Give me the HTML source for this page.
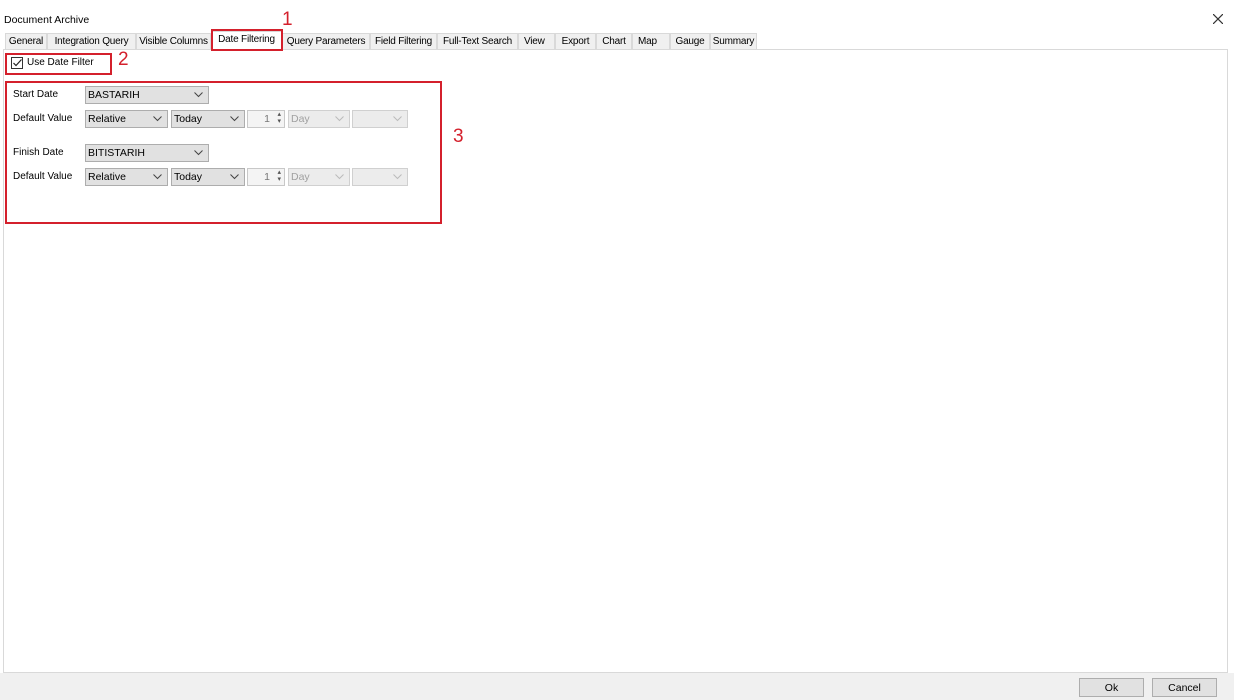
<!DOCTYPE html><html><head><style>
body{margin:0;width:1234px;height:700px;background:#fff;font-family:"Liberation Sans",sans-serif;font-size:11px;color:#000;position:relative;overflow:hidden}
.a{position:absolute;white-space:nowrap}
.tab{position:absolute;top:33px;height:16px;background:#f0f0f0;border:1px solid #d9d9d9;border-bottom:none;box-sizing:border-box;padding-top:2px;text-align:center;font-size:10px;white-space:nowrap;overflow:hidden;letter-spacing:-0.2px}
.red{position:absolute;border:2px solid #d4202c;box-sizing:border-box}
.num{position:absolute;color:#d4202c;font-size:19px}
.cb{position:absolute;height:18px;background:#e1e1e1;border:1px solid #adadad;box-sizing:border-box;padding:2px 0 0 2px;font-size:10.5px;white-space:nowrap}
.cb.d{background:#ececec;border-color:#d0d0d0;color:#a0a0a0}
.cb svg{position:absolute;right:5px;top:5px}
.btn{position:absolute;top:678px;height:19px;background:#e1e1e1;border:1px solid #adadad;box-sizing:border-box;text-align:center;padding-top:3px;font-size:10.5px}
.l{position:absolute;left:13px;font-size:10px;white-space:nowrap}
</style></head><body>
<div class="a" style="left:4px;top:14px;font-size:10.5px">Document Archive</div>
<svg class="a" style="left:1213px;top:14px" width="10" height="10"><path d="M0 0L10 10M10 0L0 10" stroke="#333" stroke-width="1.2"/></svg>
<div class="a" style="left:3px;top:49px;width:1225px;height:624px;border:1px solid #d9d9d9;box-sizing:border-box"></div>
<div class="a" style="left:0;top:673px;width:1234px;height:27px;background:#f0f0f0"></div>
<div class="tab" style="left:5px;width:42px">General</div>
<div class="tab" style="left:47px;width:89px">Integration Query</div>
<div class="tab" style="left:136px;width:75px">Visible Columns</div>
<div class="tab" style="left:211px;width:71px;top:31px;height:19px;background:#fff">Date Filtering</div>
<div class="tab" style="left:282px;width:88px">Query Parameters</div>
<div class="tab" style="left:370px;width:67px">Field Filtering</div>
<div class="tab" style="left:437px;width:81px">Full-Text Search</div>
<div class="tab" style="left:518px;width:37px;text-align:left;padding-left:5px">View</div>
<div class="tab" style="left:555px;width:41px">Export</div>
<div class="tab" style="left:596px;width:36px">Chart</div>
<div class="tab" style="left:632px;width:38px;text-align:left;padding-left:5px">Map</div>
<div class="tab" style="left:670px;width:40px">Gauge</div>
<div class="tab" style="left:710px;width:47px">Summary</div>
<div class="red" style="left:211px;top:29px;width:72px;height:22px"></div>
<div class="num" style="left:282px;top:9px">1</div>
<div class="red" style="left:5px;top:53px;width:107px;height:22px"></div>
<div class="num" style="left:118px;top:49px">2</div>
<div class="a" style="left:11px;top:57px;width:12px;height:12px;border:1px solid #333;box-sizing:border-box"></div>
<svg class="a" style="left:13px;top:59px" width="9" height="8"><path d="M0.5 4L3 6.5L8.5 0.5" stroke="#222" fill="none" stroke-width="1.2"/></svg>
<div class="a" style="left:27px;top:57px;font-size:10px">Use Date Filter</div>
<div class="red" style="left:5px;top:81px;width:437px;height:143px"></div>
<div class="num" style="left:453px;top:126px">3</div>
<div class="l" style="top:89px">Start Date</div>
<div class="l" style="top:113px">Default Value</div>
<div class="l" style="top:147px">Finish Date</div>
<div class="l" style="top:171px">Default Value</div>
<div class="cb" style="left:85px;top:86px;width:124px">BASTARIH<svg width="9" height="6"><path d="M0.5 0.5L4.5 4.5L8.5 0.5" stroke="#444" fill="none"/></svg></div>
<div class="cb" style="left:85px;top:144px;width:124px">BITISTARIH<svg width="9" height="6"><path d="M0.5 0.5L4.5 4.5L8.5 0.5" stroke="#444" fill="none"/></svg></div>
<div class="cb" style="left:85px;top:110px;width:83px">Relative<svg width="9" height="6"><path d="M0.5 0.5L4.5 4.5L8.5 0.5" stroke="#444" fill="none"/></svg></div>
<div class="cb" style="left:171px;top:110px;width:74px">Today<svg width="9" height="6"><path d="M0.5 0.5L4.5 4.5L8.5 0.5" stroke="#444" fill="none"/></svg></div>
<div class="cb" style="left:247px;top:110px;width:38px;background:#f4f4f4;border-color:#c8c8c8;color:#777;text-align:right;padding-right:14px">1<span style="position:absolute;right:3px;top:0;font-size:7px;line-height:7px;color:#555">▴<br>▾</span></div>
<div class="cb d" style="left:288px;top:110px;width:62px">Day<svg width="9" height="6"><path d="M0.5 0.5L4.5 4.5L8.5 0.5" stroke="#bbb" fill="none"/></svg></div>
<div class="cb d" style="left:352px;top:110px;width:56px"><svg width="9" height="6"><path d="M0.5 0.5L4.5 4.5L8.5 0.5" stroke="#bbb" fill="none"/></svg></div>
<div class="cb" style="left:85px;top:168px;width:83px">Relative<svg width="9" height="6"><path d="M0.5 0.5L4.5 4.5L8.5 0.5" stroke="#444" fill="none"/></svg></div>
<div class="cb" style="left:171px;top:168px;width:74px">Today<svg width="9" height="6"><path d="M0.5 0.5L4.5 4.5L8.5 0.5" stroke="#444" fill="none"/></svg></div>
<div class="cb" style="left:247px;top:168px;width:38px;background:#f4f4f4;border-color:#c8c8c8;color:#777;text-align:right;padding-right:14px">1<span style="position:absolute;right:3px;top:0;font-size:7px;line-height:7px;color:#555">▴<br>▾</span></div>
<div class="cb d" style="left:288px;top:168px;width:62px">Day<svg width="9" height="6"><path d="M0.5 0.5L4.5 4.5L8.5 0.5" stroke="#bbb" fill="none"/></svg></div>
<div class="cb d" style="left:352px;top:168px;width:56px"><svg width="9" height="6"><path d="M0.5 0.5L4.5 4.5L8.5 0.5" stroke="#bbb" fill="none"/></svg></div>
<div class="btn" style="left:1079px;width:65px">Ok</div>
<div class="btn" style="left:1152px;width:65px">Cancel</div>
</body></html>
